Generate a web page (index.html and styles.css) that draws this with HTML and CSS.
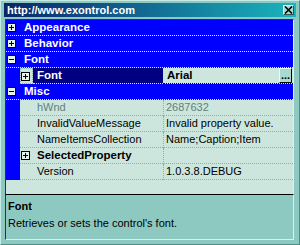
FILE: index.html
```html
<!DOCTYPE html>
<html lang="en">
<head>
    <meta charset="UTF-8">
    <title>Property Grid</title>
    <link rel="stylesheet" href="styles.css">
</head>
<body>
    <div class="window">
        <div class="titlebar">
            <span class="title">http://www.exontrol.com</span>
            <span class="close">
                <svg width="9" height="8" viewBox="0 0 9 8"><path d="M1 0.5 L8 7.5 M8 0.5 L1 7.5" stroke="#000" stroke-width="1.6"/></svg>
            </span>
        </div>

        <div class="grid">
            <div class="row cat">
                <span class="indent"><span class="box plus"></span></span>
                <span class="cat-name">Appearance</span>
            </div>
            <div class="row cat">
                <span class="indent"><span class="box plus"></span></span>
                <span class="cat-name">Behavior</span>
            </div>
            <div class="row cat">
                <span class="indent"><span class="box minus"></span></span>
                <span class="cat-name">Font</span>
            </div>
            <div class="row prop selected">
                <span class="indent"></span>
                <span class="focus"><span class="box plus"></span></span>
                <span class="name">Font</span>
                <span class="value bold">Arial<span class="dots">...</span></span>
            </div>
            <div class="row cat">
                <span class="indent"><span class="box minus"></span></span>
                <span class="cat-name">Misc</span>
            </div>
            <div class="row prop disabled">
                <span class="indent"></span>
                <span class="name">hWnd</span>
                <span class="value">2687632</span>
            </div>
            <div class="row prop">
                <span class="indent"></span>
                <span class="name">InvalidValueMessage</span>
                <span class="value">Invalid property value.</span>
            </div>
            <div class="row prop">
                <span class="indent"></span>
                <span class="name">NameItemsCollection</span>
                <span class="value">Name;Caption;Item</span>
            </div>
            <div class="row prop">
                <span class="indent"></span>
                <span class="name bold"><span class="box plus"></span>SelectedProperty</span>
                <span class="value"></span>
            </div>
            <div class="row prop">
                <span class="indent"></span>
                <span class="name">Version</span>
                <span class="value">1.0.3.8.DEBUG</span>
            </div>
        </div>

        <div class="desc">
            <div class="desc-title">Font</div>
            <div class="desc-text">Retrieves or sets the control's font.</div>
        </div>
    </div>
</body>
</html>
```

FILE: styles.css
```css
* {
    margin: 0;
    padding: 0;
    box-sizing: border-box;
}

body {
    font-family: 'Liberation Sans', Arial, sans-serif;
    font-size: 11px;
    color: #000;
}

.window {
    width: 300px;
    height: 245px;
    background: #8ec9c1;
    border: 1px solid;
    border-color: #c4ebe5 #4f8e86 #4f8e86 #c4ebe5;
    padding: 2px 3px 3px 3px;
    display: flex;
    flex-direction: column;
}

.titlebar {
    height: 14px;
    display: flex;
    align-items: center;
    justify-content: space-between;
    background: linear-gradient(to right, #0a246a, #1ab4bc);
    padding: 0 2px 0 3px;
    margin-bottom: 2px;
}

.title {
    color: #fff;
    font-weight: bold;
    font-size: 11px;
    line-height: 14px;
}

.close {
    width: 11px;
    height: 10px;
    background: #a8dad2;
    border: 1px solid;
    border-color: #e6fbf7 #2c5a55 #2c5a55 #e6fbf7;
    display: flex;
    align-items: center;
    justify-content: center;
}

.close svg {
    display: block;
}

/* grid */
.grid {
    height: 175px;
    margin: 0 2px 0 1px;
    background: #cde6dd;
    border-left: 1px solid #1f3a37;
    border-top: 1px solid #1f3a37;
    border-right: 1px solid #d8f3ee;
    display: flex;
    flex-direction: column;
}

.row {
    height: 16px;
    display: flex;
    align-items: stretch;
    flex-shrink: 0;
}

.row.cat {
    background: #0000ff;
    color: #fff;
    font-weight: bold;
    font-size: 11.5px;
    border-bottom: 1px dotted #e0e0ff;
}

.indent {
    width: 14px;
    flex-shrink: 0;
    background: #0000ff;
    display: flex;
    align-items: flex-start;
    padding: 3px 0 0 1px;
}

.cat-name {
    padding-left: 4px;
    line-height: 15px;
}

.box {
    display: inline-block;
    position: relative;
    width: 9px;
    height: 9px;
    background: #e4f3ee;
    border: 1px solid #000;
    flex-shrink: 0;
}

.box::before {
    content: '';
    position: absolute;
    left: 1px;
    top: 3px;
    width: 5px;
    height: 1px;
    background: #000;
}

.box.plus::after {
    content: '';
    position: absolute;
    left: 3px;
    top: 1px;
    width: 1px;
    height: 5px;
    background: #000;
}

.row.prop .name {
    width: 143px;
    flex-shrink: 0;
    padding-left: 17px;
    line-height: 15px;
    border-bottom: 1px dotted #7fb6ae;
    display: flex;
    align-items: flex-start;
    white-space: nowrap;
}

.row.prop .name.bold {
    padding-left: 1px;
    font-weight: bold;
    font-size: 11.5px;
}

.row.prop .name .box {
    margin: 3px 7px 0 0;
}

.value {
    flex: 1;
    padding-left: 2px;
    line-height: 15px;
    border-left: 1px dotted #7fb6ae;
    border-bottom: 1px dotted #7fb6ae;
    white-space: nowrap;
}

.bold {
    font-weight: bold;
    font-size: 11.5px;
}

.disabled {
    color: #5f7f7b;
}

.row.selected .focus {
    width: 13px;
    flex-shrink: 0;
    border: 1px dotted #7fb6ae;
    padding: 2px 0 0 0;
}

.row.selected .name {
    width: 130px;
    padding-left: 4px;
    background: #000080;
    color: #fff;
    font-weight: bold;
    font-size: 11.5px;
    border-bottom: 1px dotted #e0e0ff;
}

.row.selected .value {
    display: flex;
    justify-content: space-between;
    border-bottom: 1px dotted #000;
    border-left: none;
    padding-left: 4px;
}

.dots {
    width: 13px;
    height: 15px;
    background: #a8dad2;
    border: 1px solid;
    border-color: #e6fbf7 #000 #000 #e6fbf7;
    font-size: 11px;
    line-height: 12px;
    text-align: center;
    margin-right: 1px;
}

/* description */
.desc {
    flex: 1;
    margin: 0 2px 1px 1px;
    border-top: 1px solid #000;
    border-left: 1px solid #1f3a37;
    border-bottom: 1px solid #d8f3ee;
    border-right: 1px solid #d8f3ee;
    padding: 4px 0 0 2px;
}

.desc-title {
    font-weight: bold;
    line-height: 15px;
}

.desc-text {
    line-height: 18px;
}
```
